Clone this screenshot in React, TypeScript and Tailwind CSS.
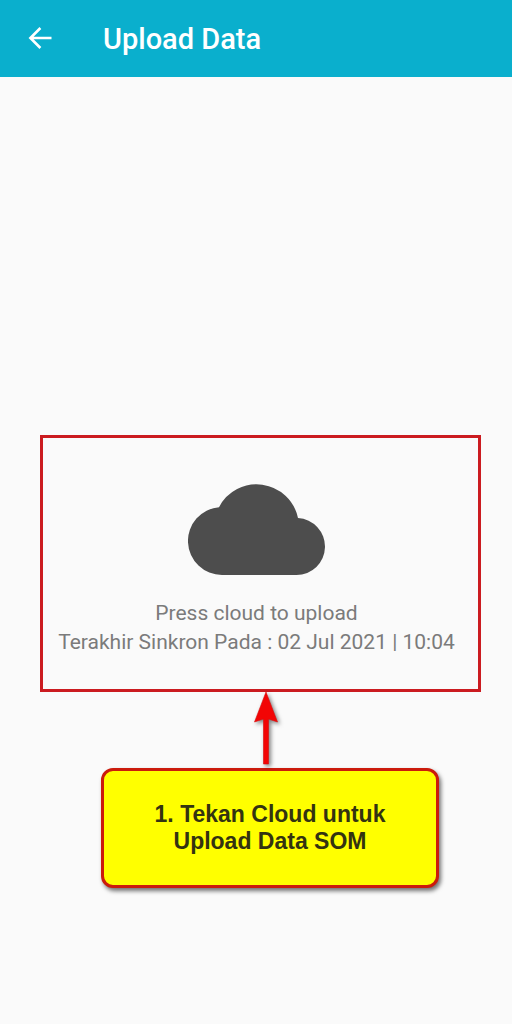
function BackIcon() {
    return (
        <svg viewBox="0 0 24 24" className="size-6" fill="none" stroke="currentColor" strokeWidth={2.6} aria-hidden="true">
            <path d="M23.5 11H2.5M12.4 1L2.4 11L12.4 21" />
        </svg>
    )
}

function CloudIcon() {
    return (
        <svg viewBox="0 0 137 91" className="h-[91px] w-[137px]" fill="currentColor" aria-hidden="true">
            <path d="M34 91A34 34 0 0 1 31 23.13A42.3 42.3 0 0 1 110 34.04A28.5 28.5 0 0 1 108.5 91Z" />
        </svg>
    )
}

function ArrowUp() {
    return (
        <svg viewBox="0 0 24 76" className="h-[76px] w-6 overflow-visible drop-shadow-[2px_2px_2px_rgba(0,0,0,0.5)]" aria-hidden="true">
            <path d="M12 0L23.5 30L14.5 27V72H9.5V27L0.5 30Z" fill="#f20505" stroke="#d80b0b" strokeWidth={0.6} />
        </svg>
    )
}

export default function App() {
    return (
        <div className="min-h-screen bg-[#fafafa] font-[Roboto,sans-serif]">
            <header className="flex h-[77px] items-center bg-[#0aafcd] px-7 text-white">
                <button type="button" aria-label="Back" className="mr-[51px]">
                    <BackIcon />
                </button>
                <h1 className="text-[29px] leading-8 font-medium">Upload Data</h1>
            </header>

            <main className="flex flex-col pt-[358px]">
                <section className="mr-[31px] ml-10 flex flex-col items-center border-[3px] border-[#cb1b20] pt-[46px] pr-2 pb-8 text-center">
                    <button type="button" aria-label="Upload" className="mb-6 text-[#4d4d4d]">
                        <CloudIcon />
                    </button>
                    <p className="text-[21px] leading-[29px] text-[#7b7b7b]">
                        Press cloud to upload
                        <br />
                        Terakhir Sinkron Pada : 02 Jul 2021 | 10:04
                    </p>
                </section>

                <div className="flex justify-center pl-5">
                    <ArrowUp />
                </div>

                <div className="flex justify-center pl-7">
                    <p className="w-full max-w-[338px] rounded-xl border-[3px] border-[#cb1b0c] bg-[#ffff00] py-[30px] text-center font-['Liberation_Sans',sans-serif] text-[23px] leading-[27px] font-bold text-[#333311] shadow-[2px_3px_4px_rgba(0,0,0,0.55)]">
                        1. Tekan Cloud untuk
                        <br />
                        Upload Data SOM
                    </p>
                </div>
            </main>
        </div>
    )
}
